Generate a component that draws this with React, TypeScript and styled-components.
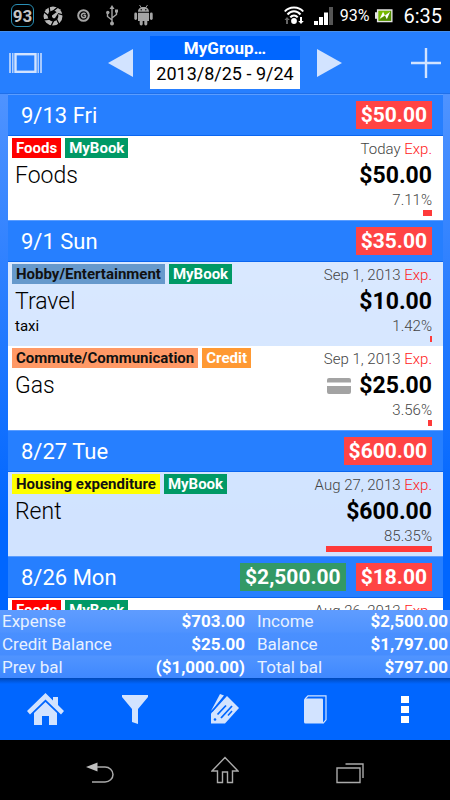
import React from "react";
import styled, { createGlobalStyle } from "styled-components";

const GlobalStyle = createGlobalStyle`
  *, *::before, *::after { box-sizing: border-box; }
  html, body { margin: 0; padding: 0; }
  body {
    font-family: Roboto, "Noto Sans", sans-serif;
    background: #000;
    color: #000;
  }
  h1, h2, h3, p, ul, dl, dd, dt { margin: 0; padding: 0; font: inherit; }
  ul { list-style: none; }
  button {
    border: 0;
    padding: 0;
    background: none;
    color: inherit;
    font: inherit;
    cursor: pointer;
  }
  svg { display: block; }
`;

const Screen = styled.div`
  display: flex;
  flex-direction: column;
  height: 100vh;
  background: linear-gradient(#4f93ff 94px, #0066ff 520px);
`;

/* ---------- status bar ---------- */

const StatusBar = styled.div`
  flex: none;
  display: flex;
  align-items: center;
  justify-content: space-between;
  height: 31px;
  padding: 0 8px 0 11px;
  background: #000;
  color: #fff;
`;

const StatusGroup = styled.div<{ $gap: number }>`
  display: flex;
  align-items: center;
  gap: ${(p) => p.$gap}px;
`;

const LevelBadge = styled.span`
  width: 23px;
  height: 23px;
  border: 1px solid #2a8fb5;
  border-radius: 6px;
  color: #c4c4c4;
  font-size: 17px;
  font-weight: 700;
  line-height: 22px;
  text-align: center;
`;

const Percent = styled.span`
  font-size: 16px;
  line-height: 20px;
`;

const Clock = styled.time`
  padding-left: 4px;
  font-size: 20px;
  line-height: 24px;
`;

/* ---------- header ---------- */

const Header = styled.header`
  flex: none;
  display: grid;
  grid-template-columns: 1fr auto 1fr;
  align-items: center;
  height: 63px;
  padding: 0 9px;
  border-top: 1px solid #4790ee;
  border-bottom: 1px solid #1f70ea;
  background: #267fff;
`;

const HeaderSide = styled.div`
  display: flex;
  align-items: center;
  justify-content: space-between;
`;

const IconButton = styled.button`
  display: flex;
  align-items: center;
  justify-content: center;
  color: #d2e3ff;
`;

const PeriodButton = styled.button`
  width: 150px;
  margin: 0 17px;
  background: #fff;
  border: 1px solid #fff;
  border-top: 0;
  text-align: center;
`;

const GroupName = styled.span`
  display: block;
  margin: 0 -1px;
  background: #0066ff;
  color: #fff;
  font-size: 17px;
  font-weight: 700;
  line-height: 24px;
`;

const PeriodRange = styled.span`
  display: block;
  color: #000;
  font-size: 18px;
  line-height: 28px;
  white-space: nowrap;
`;

/* ---------- transactions ---------- */

const DayList = styled.main`
  flex: 1 1 0;
  min-height: 0;
  overflow-y: auto;
  scrollbar-width: none;
  padding: 0 7px 0 8px;
`;

const DayHeader = styled.header`
  display: flex;
  align-items: center;
  justify-content: space-between;
  height: 42px;
  padding: 0 11px 0 13px;
  border-top: 1px solid #5b9dff;
  border-bottom: 1px solid #0b66f0;
  background: #267fff;
`;

const DayTitle = styled.h2`
  padding-top: 2px;
  color: #fff;
  font-size: 22px;
  font-weight: 400;
  line-height: 28px;
`;

const Totals = styled.div`
  display: flex;
  gap: 10px;
`;

const Total = styled.span<{ $kind: "income" | "expense" }>`
  padding: 0 5px;
  background: ${(p) => (p.$kind === "income" ? "#339966" : "#ff4444")};
  color: #fff;
  font-size: 21px;
  font-weight: 700;
  line-height: 28px;
`;

const Entry = styled.li<{ $shaded?: boolean }>`
  display: flex;
  justify-content: space-between;
  height: 84px;
  padding: 2px 11px 4px 4px;
  background: ${(p) => (p.$shaded ? "rgba(255, 255, 255, 0.82)" : "#fff")};
`;

const EntryInfo = styled.div`
  display: flex;
  flex-direction: column;
`;

const EntryFigures = styled.div`
  display: flex;
  flex-direction: column;
  align-items: flex-end;
`;

const Tags = styled.div`
  display: flex;
  align-items: flex-start;
  gap: 4px;
  height: 22px;
`;

const Tag = styled.span<{ $bg: string; $ink: string }>`
  padding: 0 4px;
  background: ${(p) => p.$bg};
  color: ${(p) => p.$ink};
  font-size: 15px;
  font-weight: 700;
  line-height: 20px;
  white-space: nowrap;
`;

const EntryTitle = styled.h3`
  padding-left: 3px;
  font-size: 23px;
  font-weight: 300;
  line-height: 32px;
`;

const EntryNote = styled.p`
  padding-left: 3px;
  font-size: 15px;
  line-height: 16px;
`;

const EntryDate = styled.p`
  color: #444;
  font-size: 15px;
  font-weight: 300;
  line-height: 22px;
`;

const ExpenseMark = styled.span`
  color: #f22;
`;

const AmountLine = styled.p`
  display: flex;
  align-items: center;
  gap: 8px;
  font-size: 23px;
  font-weight: 700;
  line-height: 32px;
`;

const Share = styled.p`
  color: #444;
  font-size: 15px;
  font-weight: 300;
  line-height: 16px;
`;

const ShareTrack = styled.div`
  display: flex;
  justify-content: flex-end;
  width: 124px;
  margin-top: 2px;
`;

const ShareBar = styled.div`
  height: 6px;
  background: #ff3a3a;
`;

/* ---------- summary ---------- */

const Summary = styled.dl`
  flex: none;
  display: grid;
  grid-template-columns: 56fr 44fr;
  gap: 1px 12px;
  padding: 0 2px;
  background: linear-gradient(
    #5f9cff,
    #4f93ff 22px,
    #4a90ff 23px,
    #468dff 45px,
    #5094ff 46px,
    #3f88ff
  );
`;

const SummaryItem = styled.div`
  display: flex;
  justify-content: space-between;
  color: #fff;
  font-size: 17px;
  line-height: 22px;
`;

const SummaryLabel = styled.dt`
  color: #e8f1ff;
`;

const SummaryValue = styled.dd`
  font-weight: 700;
`;

/* ---------- bottom bars ---------- */

const Toolbar = styled.nav`
  flex: none;
  display: grid;
  grid-template-columns: repeat(5, 1fr);
  height: 62px;
  background: linear-gradient(#0048b8, #0066ff 6px);
`;

const SystemBar = styled.nav`
  flex: none;
  display: grid;
  grid-template-columns: repeat(3, 125px);
  justify-content: center;
  height: 60px;
  background: #000;
`;

const SystemButton = styled(IconButton)`
  color: #aaa;
`;

/* ---------- icons ---------- */

const ApertureIcon = () => (
  <svg width="20" height="20" viewBox="0 0 20 20" aria-hidden="true">
    <circle cx="10" cy="10" r="9.5" fill="#b8b8b8" />
    <circle cx="10" cy="10" r="5.4" fill="#000" />
    <g stroke="#000" strokeWidth="1.3">
      <path d="M6 0l1 7M15 1l-6 5M20 9l-7-2M16 18l-3-6M8 20l3-6M0 14l7-1M1 6l5 4" />
    </g>
    <path d="M9 9.500l9-6.500-6 9a2.200 2.200 0 0 1-3-2.500z" fill="#b8b8b8" />
  </svg>
);

const CopyrightIcon = () => (
  <svg width="13" height="13" viewBox="0 0 13 13" aria-hidden="true">
    <circle cx="6.500" cy="6.500" r="5.300" fill="none" stroke="#a5a5a5" strokeWidth="2" />
    <path d="M8.500 5A2.300 2.300 0 1 0 8.500 8V6.500H6.500" fill="none" stroke="#a5a5a5" strokeWidth="1.500" />
  </svg>
);

const UsbIcon = () => (
  <svg width="12" height="21" viewBox="0 0 12 21" fill="none" stroke="#a5a5a5" strokeWidth="1.400" aria-hidden="true">
    <path d="M6 3v15M6 15l-4.500-3.500V8M6 13l4.500-3.500V6.500" />
    <path d="M6 0l2.500 4h-5z" fill="#a5a5a5" stroke="none" />
    <circle cx="6" cy="18.500" r="2" fill="#a5a5a5" stroke="none" />
    <circle cx="1.800" cy="7.500" r="1.700" fill="#a5a5a5" stroke="none" />
    <path d="M9 4.500h3v3H9z" fill="#a5a5a5" stroke="none" />
  </svg>
);

const RobotIcon = () => (
  <svg width="19" height="21" viewBox="0 0 19 21" fill="#a5a5a5" aria-hidden="true">
    <path d="M4 6.800C4 3.800 6.200 2 9.500 2S15 3.800 15 6.800zM4 7.800h11v8.200H4z" />
    <path d="M5.500 0l2 3M13.500 0l-2 3" stroke="#a5a5a5" strokeWidth="0.900" />
    <rect x="0.300" y="7.500" width="2.800" height="7.500" rx="1.400" />
    <rect x="15.900" y="7.500" width="2.800" height="7.500" rx="1.400" />
    <rect x="5.700" y="14" width="3" height="6.500" rx="1.400" />
    <rect x="10.300" y="14" width="3" height="6.500" rx="1.400" />
    <circle cx="7.200" cy="4.800" r="0.700" fill="#000" />
    <circle cx="11.800" cy="4.800" r="0.700" fill="#000" />
  </svg>
);

const WifiIcon = () => (
  <svg width="20" height="19" viewBox="0 0 20 19" fill="none" stroke="#fff" strokeWidth="2" aria-hidden="true">
    <path d="M0.800 5.500C5 0 15 0 19.200 5.500M3.500 8.500c3.500-4.300 9.500-4.300 13 0M6.300 11.300c2-2.500 5.400-2.500 7.400 0" />
    <circle cx="10" cy="15" r="2.900" fill="#fff" stroke="none" />
    <path d="M3 11l2.800 3H4v4H2v-4H0.500z" fill="#666" stroke="none" />
    <path d="M17 18l2.800-3H18v-4h-2v4h-1.800z" fill="#fff" stroke="none" />
  </svg>
);

const SignalIcon = () => (
  <svg width="20" height="18" viewBox="0 0 20 18" fill="#fff" aria-hidden="true">
    <path d="M0 14h4v4H0zM5 10h4v8H5zM10 5.500h4V18h-4z" />
    <path d="M15 0h4v18h-4z" fill="#555" />
  </svg>
);

const BatteryIcon = () => (
  <svg width="18" height="15" viewBox="0 0 19 15" aria-hidden="true">
    <path d="M0 4h2V1h16.500v13.500H2V11H0z" fill="#e4e4e4" />
    <path d="M3.500 2.500H17V13H3.500z" fill="#76b900" />
    <path d="M3.500 13L17 2.500V13z" fill="#4f8a00" />
    <path d="M5 11l3.500-7.500 2 4L16 3.500l-3.500 8-2-4z" fill="#fff" />
  </svg>
);

const CarouselIcon = () => (
  <svg width="33" height="20" viewBox="0 0 33 20" aria-hidden="true">
    <path d="M1 0v20M32 0v20" stroke="currentColor" strokeWidth="1.500" />
    <path d="M3.800 0v20M29.200 0v20" stroke="currentColor" strokeWidth="1.200" />
    <rect x="6.500" y="1.200" width="20" height="17.600" fill="none" stroke="currentColor" strokeWidth="2.400" />
  </svg>
);

const PrevIcon = () => (
  <svg width="25" height="28" viewBox="0 0 25 28" fill="currentColor" aria-hidden="true">
    <path d="M0 14L25 0v28z" />
  </svg>
);

const NextIcon = () => (
  <svg width="25" height="28" viewBox="0 0 25 28" fill="currentColor" aria-hidden="true">
    <path d="M25 14L0 0v28z" />
  </svg>
);

const PlusIcon = () => (
  <svg width="30" height="30" viewBox="0 0 30 30" stroke="currentColor" strokeWidth="2.400" aria-hidden="true">
    <path d="M15 0v30M0 15h30" />
  </svg>
);

const CardIcon = () => (
  <svg width="24" height="16" viewBox="0 0 24 16" fill="#a3a3a3" aria-hidden="true">
    <path d="M0 4.500V2a2 2 0 0 1 2-2h20a2 2 0 0 1 2 2v2.500zM0 8h24v6a2 2 0 0 1-2 2H2a2 2 0 0 1-2-2z" />
  </svg>
);

const HomeIcon = () => (
  <svg width="37" height="33" viewBox="0 0 37 33" fill="currentColor" aria-hidden="true">
    <path d="M18.500 0L0 18l3 3.500L18.500 6.500 34 21.500l3-3.500-6-6V4h-5v3.500z" />
    <path d="M18.500 9L7 20v12h8v-9h7v9h8V20z" />
  </svg>
);

const FilterIcon = () => (
  <svg width="26" height="29" viewBox="0 0 26 29" fill="currentColor" aria-hidden="true">
    <path d="M0 0h26v2L16 14v15l-6-2V14L0 2z" />
  </svg>
);

const TagsIcon = () => (
  <svg width="28" height="30" viewBox="0 0 28 30" aria-hidden="true">
    <path d="M0 17L9 0l4 1.500L3 14z" fill="currentColor" />
    <path d="M0 19.500L16 2l12 12-14 15.500H0z" fill="currentColor" />
    <path d="M1 17.500L14 2" stroke="#0066ff" strokeWidth="1.200" />
    <circle cx="4" cy="25.500" r="1.300" fill="#0066ff" />
    <path d="M6.500 20.500l8.500-9M10 24l11-12" stroke="#0066ff" strokeWidth="1.800" fill="none" />
    <path d="M17 21.500l4-4.500" stroke="#0066ff" strokeWidth="1.500" fill="none" />
  </svg>
);

const BookIcon = () => (
  <svg width="23" height="29" viewBox="0 0 23 29" aria-hidden="true">
    <path d="M1 4l3-3.200h18v24l-3 3.500" fill="none" stroke="currentColor" strokeWidth="1.200" />
    <path d="M0 5q0-1.500 1.500-1.500H18q1 0 1 1V28.500H1.500Q0 28.500 0 27z" fill="currentColor" />
  </svg>
);

const MoreIcon = () => (
  <svg width="8" height="27" viewBox="0 0 8 27" fill="#fff" aria-hidden="true">
    <path d="M0 0h8v7H0zM0 10h8v7H0zM0 20h8v7H0z" />
  </svg>
);

const BackIcon = () => (
  <svg width="28" height="28" viewBox="0 0 28 28" aria-hidden="true">
    <path d="M0 11L11.500 6.500v9z" fill="#c0c0c0" />
    <path d="M11 11h8a8 7.500 0 0 1 0 15H6" fill="none" stroke="currentColor" strokeWidth="1.500" />
  </svg>
);

const SystemHomeIcon = () => (
  <svg width="28" height="28" viewBox="0 0 28 28" fill="none" stroke="currentColor" strokeWidth="1.400" aria-hidden="true">
    <path d="M14 1.500L1 15h5.500v11.500h5V16h5v10.500h5V15H27z" />
  </svg>
);

const RecentIcon = () => (
  <svg width="28" height="28" viewBox="0 0 28 28" fill="none" stroke="currentColor" strokeWidth="1.400" aria-hidden="true">
    <path d="M1 12h23v14.500H1zM9.500 8H27v14" />
  </svg>
);

/* ---------- data ---------- */

type TagData = { label: string; bg: string; ink: string };

type EntryData = {
  tags: TagData[];
  title: string;
  note?: string;
  date: string;
  amount: string;
  share: number;
  card?: boolean;
  shaded?: boolean;
};

type DayData = { day: string; income?: string; expense: string; entries: EntryData[] };

const foods: TagData = { label: "Foods", bg: "#ff0000", ink: "#fff" };
const myBook: TagData = { label: "MyBook", bg: "#009966", ink: "#fff" };
const credit: TagData = { label: "Credit", bg: "#ff9933", ink: "#fff" };
const hobby: TagData = { label: "Hobby/Entertainment", bg: "#6699cc", ink: "#111" };
const commute: TagData = { label: "Commute/Communication", bg: "#ff9966", ink: "#111" };
const housing: TagData = { label: "Housing expenditure", bg: "#ffff00", ink: "#111" };

const days: DayData[] = [
  {
    day: "9/13 Fri",
    expense: "$50.00",
    entries: [{ tags: [foods, myBook], title: "Foods", date: "Today", amount: "$50.00", share: 7.11 }],
  },
  {
    day: "9/1 Sun",
    expense: "$35.00",
    entries: [
      { tags: [hobby, myBook], title: "Travel", note: "taxi", date: "Sep 1, 2013", amount: "$10.00", share: 1.42, shaded: true },
      { tags: [commute, credit], title: "Gas", date: "Sep 1, 2013", amount: "$25.00", share: 3.56, card: true },
    ],
  },
  {
    day: "8/27 Tue",
    expense: "$600.00",
    entries: [{ tags: [housing, myBook], title: "Rent", date: "Aug 27, 2013", amount: "$600.00", share: 85.35, shaded: true }],
  },
  {
    day: "8/26 Mon",
    income: "$2,500.00",
    expense: "$18.00",
    entries: [{ tags: [foods, myBook], title: "Foods", date: "Aug 26, 2013", amount: "$18.00", share: 2.56 }],
  },
];

const summary = [
  ["Expense", "$703.00"],
  ["Income", "$2,500.00"],
  ["Credit Balance", "$25.00"],
  ["Balance", "$1,797.00"],
  ["Prev bal", "($1,000.00)"],
  ["Total bal", "$797.00"],
];

const tools = [
  { label: "Home", Icon: HomeIcon },
  { label: "Filter", Icon: FilterIcon },
  { label: "Categories", Icon: TagsIcon },
  { label: "Books", Icon: BookIcon },
  { label: "More options", Icon: MoreIcon },
];

const EntryRow = ({ entry }: { entry: EntryData }) => (
  <Entry $shaded={entry.shaded}>
    <EntryInfo>
      <Tags>
        {entry.tags.map((t) => (
          <Tag key={t.label} $bg={t.bg} $ink={t.ink}>
            {t.label}
          </Tag>
        ))}
      </Tags>
      <EntryTitle>{entry.title}</EntryTitle>
      {entry.note && <EntryNote>{entry.note}</EntryNote>}
    </EntryInfo>
    <EntryFigures>
      <EntryDate>
        {entry.date} <ExpenseMark>Exp.</ExpenseMark>
      </EntryDate>
      <AmountLine>
        {entry.card && <CardIcon />}
        <span>{entry.amount}</span>
      </AmountLine>
      <Share>{entry.share.toFixed(2)}%</Share>
      <ShareTrack>
        <ShareBar style={{ width: `${entry.share}%` }} />
      </ShareTrack>
    </EntryFigures>
  </Entry>
);

export default function App() {
  return (
    <>
      <GlobalStyle />
      <Screen>
        <StatusBar>
          <StatusGroup $gap={14}>
            <StatusGroup $gap={9}>
              <LevelBadge>93</LevelBadge>
              <ApertureIcon />
            </StatusGroup>
            <StatusGroup $gap={16}>
              <CopyrightIcon />
              <UsbIcon />
              <RobotIcon />
            </StatusGroup>
          </StatusGroup>
          <StatusGroup $gap={6}>
            <StatusGroup $gap={10}>
              <WifiIcon />
              <SignalIcon />
            </StatusGroup>
            <Percent>93%</Percent>
            <BatteryIcon />
            <Clock>6:35</Clock>
          </StatusGroup>
        </StatusBar>

        <Header>
          <HeaderSide>
            <IconButton type="button" aria-label="Switch view">
              <CarouselIcon />
            </IconButton>
            <IconButton type="button" aria-label="Previous period">
              <PrevIcon />
            </IconButton>
          </HeaderSide>
          <PeriodButton type="button">
            <GroupName>MyGroup…</GroupName>
            <PeriodRange>2013/8/25 - 9/24</PeriodRange>
          </PeriodButton>
          <HeaderSide>
            <IconButton type="button" aria-label="Next period">
              <NextIcon />
            </IconButton>
            <IconButton type="button" aria-label="Add entry">
              <PlusIcon />
            </IconButton>
          </HeaderSide>
        </Header>

        <DayList>
          {days.map((d) => (
            <section key={d.day}>
              <DayHeader>
                <DayTitle>{d.day}</DayTitle>
                <Totals>
                  {d.income && <Total $kind="income">{d.income}</Total>}
                  <Total $kind="expense">{d.expense}</Total>
                </Totals>
              </DayHeader>
              <ul>
                {d.entries.map((e) => (
                  <EntryRow key={e.title} entry={e} />
                ))}
              </ul>
            </section>
          ))}
        </DayList>

        <Summary>
          {summary.map(([label, value]) => (
            <SummaryItem key={label}>
              <SummaryLabel>{label}</SummaryLabel>
              <SummaryValue>{value}</SummaryValue>
            </SummaryItem>
          ))}
        </Summary>

        <Toolbar aria-label="Tools">
          {tools.map(({ label, Icon }) => (
            <IconButton key={label} type="button" aria-label={label}>
              <Icon />
            </IconButton>
          ))}
        </Toolbar>

        <SystemBar aria-label="System">
          <SystemButton type="button" aria-label="Back">
            <BackIcon />
          </SystemButton>
          <SystemButton type="button" aria-label="Home screen">
            <SystemHomeIcon />
          </SystemButton>
          <SystemButton type="button" aria-label="Recent apps">
            <RecentIcon />
          </SystemButton>
        </SystemBar>
      </Screen>
    </>
  );
}
